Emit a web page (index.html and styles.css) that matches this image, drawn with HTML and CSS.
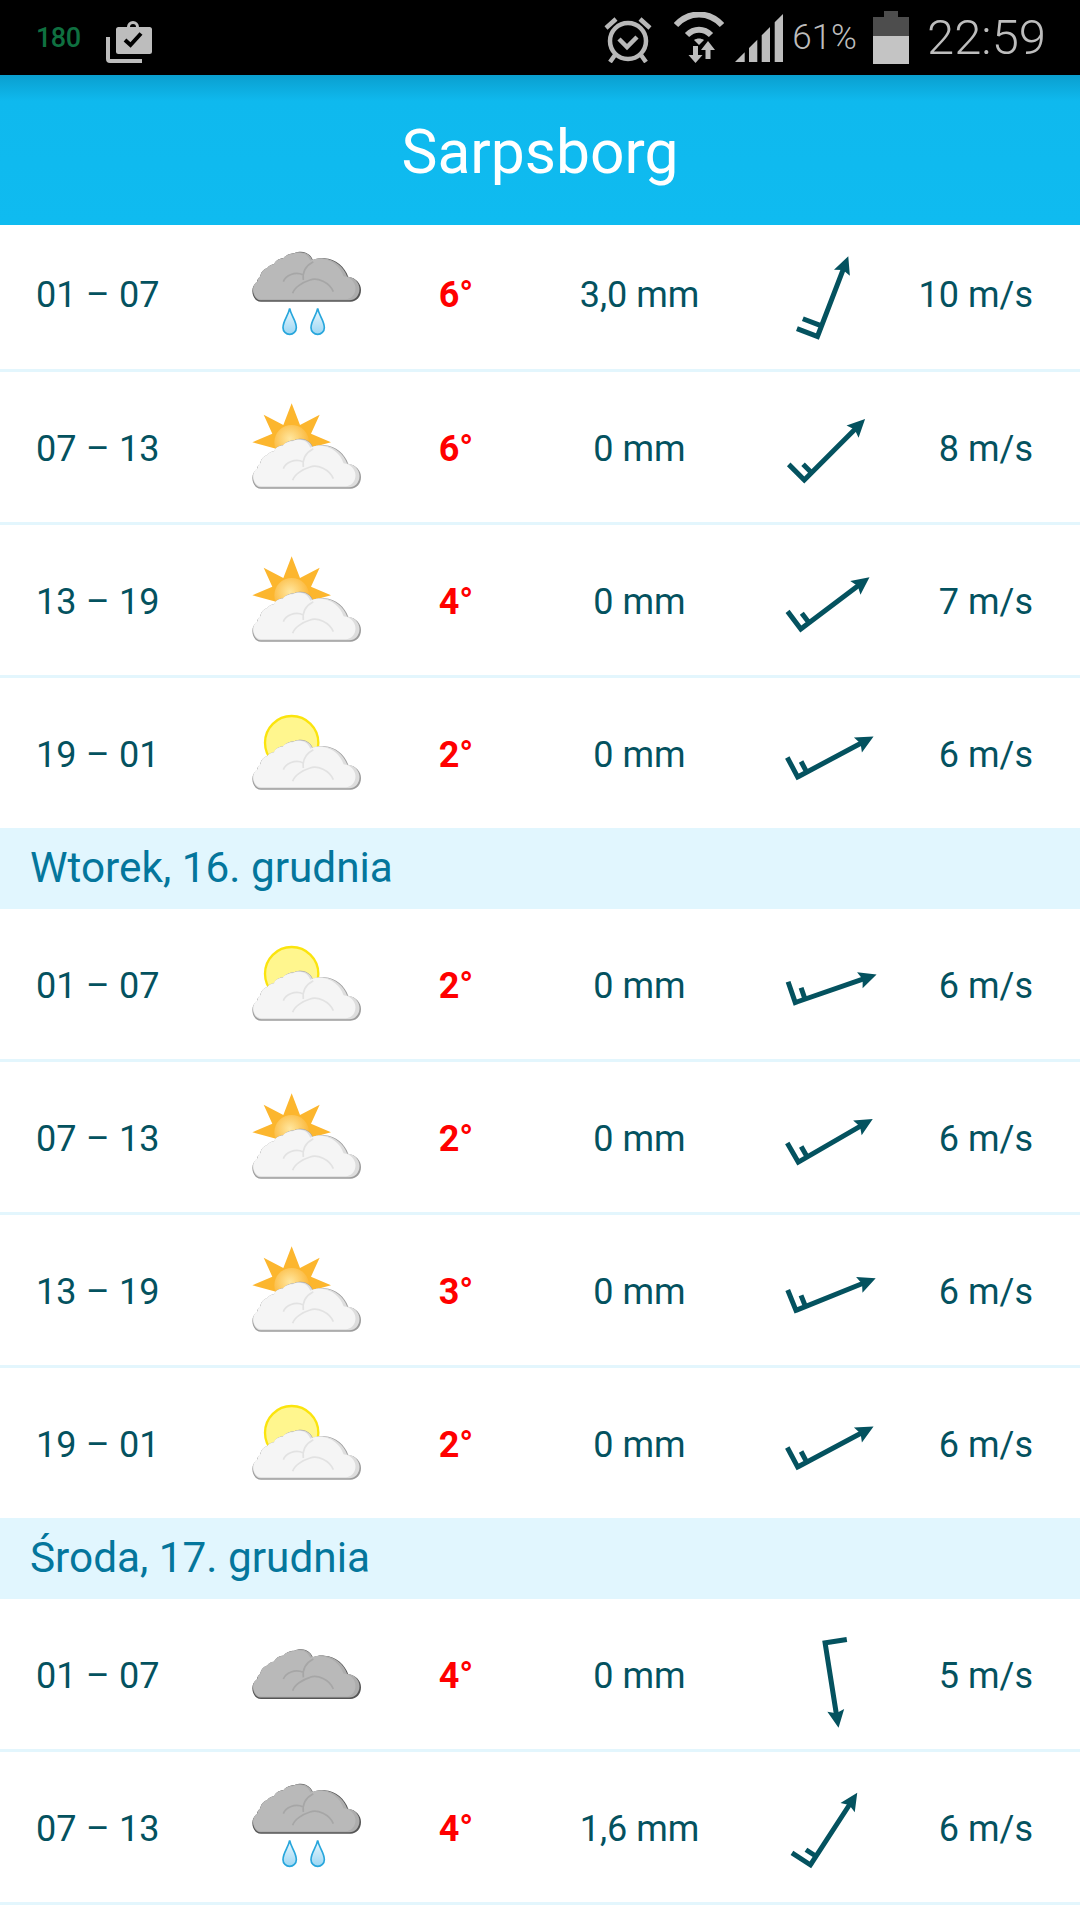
FILE: index.html
```html
<!DOCTYPE html>
<html lang="pl">
<head>
<meta charset="utf-8">
<title>Sarpsborg</title>
<link rel="stylesheet" href="styles.css">
</head>
<body>
<svg class="defs" width="0" height="0" aria-hidden="true">
  <defs>
    <radialGradient id="sunGrad" cx="45%" cy="40%" r="65%">
      <stop offset="0" stop-color="#ffe7a0"/><stop offset="1" stop-color="#fbb02a"/>
    </radialGradient>
    <linearGradient id="dropGrad" x1="0" y1="0" x2="0" y2="1">
      <stop offset="0" stop-color="#eef9fe"/><stop offset="1" stop-color="#9bd6f3"/>
    </linearGradient>
    <path id="cloud-shape" d="M26 150C8 150 0 132 0 118C0 106 6 96 14 92C14 84 18 78 24 75C24 64 32 54 44 50C50 42 58 38 66 38C68 28 80 20 94 20C100 10 114 5 126 5C134 0 150 -1 160 3C172 8 178 16 182 26C192 20 204 19 216 20C250 22 278 46 288 76C310 78 326 95 326 115C326 136 312 150 295 150Z"/>
    <symbol id="cloud" viewBox="0 0 326 150" overflow="visible">
      <use href="#cloud-shape" class="cl-edge"/>
      <use href="#cloud-shape" class="cl-mid" transform="translate(2 1) scale(.98 .965)"/>
      <use href="#cloud-shape" class="cl-body" transform="translate(3 3) scale(.94 .93)"/>
      <path class="cl-curl" d="M93 90C100 72 128 58 153 70M121 125C126 108 150 92 173 85C195 76 232 92 243 120M153 85C150 62 160 42 183 30"/>
    </symbol>
    <symbol id="rain" viewBox="0 0 330 264">
      <use href="#cloud" class="cloud-dark" x="1" y="2" width="326" height="150"/>
      <path class="drop" d="M113 172C117 194 133 208 133 230A20 20 0 0 1 93 230C93 208 109 194 113 172Z"/>
      <path class="drop" d="M197 172C201 194 217 208 217 230A20 20 0 0 1 177 230C177 208 193 194 197 172Z"/>
    </symbol>
    <symbol id="overcast" viewBox="0 0 330 264">
      <use href="#cloud" class="cloud-dark" x="1" y="57" width="326" height="150"/>
    </symbol>
    <symbol id="sun-cloud" viewBox="0 0 330 264">
      <path class="rays" d="M119 1L144 66L203 35L177 92L237 118L119 150L1 118L61 92L35 35L94 66Z"/>
      <circle cx="119" cy="118" r="52" fill="url(#sunGrad)"/>
      <use href="#cloud" class="cloud-light" x="1" y="107" width="326" height="150"/>
    </symbol>
    <symbol id="pale-sun-cloud" viewBox="0 0 330 264">
      <circle class="pale-sun" cx="119" cy="101" r="80"/>
      <use href="#cloud" class="cloud-light" x="1" y="92" width="326" height="150"/>
    </symbol>
    <path id="head" d="M0 -48.200L8.500 -30.500L0 -33.500L-8.500 -30.500Z"/>
    <symbol id="wind-2" viewBox="-55 -60.500 110 110" overflow="visible">
      <path class="shaft" d="M0 37.800V-36M2.500 37.800H-22M0 26.500H-20"/>
      <use href="#head" class="head"/>
    </symbol>
    <symbol id="wind-h" viewBox="-55 -60.500 110 110" overflow="visible">
      <path class="shaft" d="M0 37.800V-36M2.500 37.800H-22M0 27.500H-12"/>
      <use href="#head" class="head"/>
    </symbol>
    <symbol id="wind-1" viewBox="-55 -60.500 110 110" overflow="visible">
      <path class="shaft" d="M0 37.800V-36M2.500 37.800H-22"/>
      <use href="#head" class="head"/>
    </symbol>
  </defs>
</svg>

<div class="screen">
  <header class="status">
    <div class="status-left">
      <span class="net">180</span>
      <svg class="ic-clip" width="46" height="44" viewBox="0 0 46 44">
        <path class="clip-back" d="M2 18V40A2 2 0 0 0 4 42H36"/>
        <path class="clip-body" d="M12.500 8H21A6 6 0 0 1 33 8H43.500A2.500 2.500 0 0 1 46 10.500V32.500A2.500 2.500 0 0 1 43.500 35H12.500A2.500 2.500 0 0 1 10 32.500V10.500A2.500 2.500 0 0 1 12.500 8Z"/>
        <path class="clip-hole" d="M24 8A3 3 0 0 1 30 8Z"/>
        <path class="clip-check" d="M19 21L24.500 26L35 14.500"/>
      </svg>
    </div>
    <div class="status-right">
      <svg class="ic-alarm" width="48" height="49" viewBox="0 0 48 49">
        <circle class="st-line" cx="24" cy="27" r="18"/>
        <path class="st-line" d="M15 25L23 33L33 23"/>
        <path class="st-line" d="M2 14L12 5M46 14L36 5M11 41L6 48M37 41L42 48"/>
      </svg>
      <svg class="ic-wifi" width="50" height="51" viewBox="0 0 50 51">
        <path class="st-band" d="M2 13C15 -1 35 -1 48 13M13 23C20 16 30 16 37 23"/>
        <path class="st-fill" d="M20 28C23 26 27 26 30 28L25 33Z"/>
        <path class="st-fill" d="M19 34H24V43H28.500L21.500 51L14.500 43H19Z"/>
        <path class="st-fill" d="M31.500 47V38H27L34 29L41 38H36.500V47Z"/>
      </svg>
      <svg class="ic-signal" width="48" height="48" viewBox="0 0 48 48">
        <path class="st-fill" d="M0 48L9.700 38.300V48ZM14 34L22.300 25.700V48H14ZM26.700 21.300L35 13V48H26.700ZM39.700 8.300L48 0V48H39.700Z"/>
      </svg>
      <span class="pct">61%</span>
      <svg class="ic-batt" width="36" height="53" viewBox="0 0 36 53">
        <path class="batt-empty" d="M11 0H25V6H36V25H0V6H11Z"/>
        <rect class="batt-full" x="0" y="25" width="36" height="28"/>
      </svg>
      <span class="clock">22:59</span>
    </div>
  </header>

  <div class="appbar"><h1 class="title">Sarpsborg</h1></div>

  <main class="forecast">
    <div class="row row-first">
      <span class="cell time">01 – 07</span>
      <svg class="wx" viewBox="0 0 330 264"><use href="#rain"/></svg>
      <span class="cell temp">6°</span><span class="cell mm">3,0 mm</span>
      <svg class="wind" viewBox="-54 -61.200 110 110"><use href="#wind-2" x="-55" y="-60.500" width="110" height="110" transform="rotate(21)"/></svg>
      <span class="cell speed">10 m/s</span>
    </div>
    <div class="row">
      <span class="cell time">07 – 13</span>
      <svg class="wx" viewBox="0 0 330 264"><use href="#sun-cloud"/></svg>
      <span class="cell temp">6°</span><span class="cell mm">0 mm</span>
      <svg class="wind" viewBox="-54 -61.200 110 110"><use href="#wind-h" x="-55" y="-60.500" width="110" height="110" transform="rotate(45)"/></svg>
      <span class="cell speed">8 m/s</span>
    </div>
    <div class="row">
      <span class="cell time">13 – 19</span>
      <svg class="wx" viewBox="0 0 330 264"><use href="#sun-cloud"/></svg>
      <span class="cell temp">4°</span><span class="cell mm">0 mm</span>
      <svg class="wind" viewBox="-54 -61.200 110 110"><use href="#wind-h" x="-55" y="-60.500" width="110" height="110" transform="rotate(53)"/></svg>
      <span class="cell speed">7 m/s</span>
    </div>
    <div class="row row-last">
      <span class="cell time">19 – 01</span>
      <svg class="wx" viewBox="0 0 330 264"><use href="#pale-sun-cloud"/></svg>
      <span class="cell temp">2°</span><span class="cell mm">0 mm</span>
      <svg class="wind" viewBox="-54 -61.200 110 110"><use href="#wind-h" x="-55" y="-60.500" width="110" height="110" transform="rotate(62)"/></svg>
      <span class="cell speed">6 m/s</span>
    </div>

    <h2 class="day">Wtorek, 16. grudnia</h2>

    <div class="row">
      <span class="cell time">01 – 07</span>
      <svg class="wx" viewBox="0 0 330 264"><use href="#pale-sun-cloud"/></svg>
      <span class="cell temp">2°</span><span class="cell mm">0 mm</span>
      <svg class="wind" viewBox="-54 -61.200 110 110"><use href="#wind-h" x="-55" y="-60.500" width="110" height="110" transform="rotate(71)"/></svg>
      <span class="cell speed">6 m/s</span>
    </div>
    <div class="row">
      <span class="cell time">07 – 13</span>
      <svg class="wx" viewBox="0 0 330 264"><use href="#sun-cloud"/></svg>
      <span class="cell temp">2°</span><span class="cell mm">0 mm</span>
      <svg class="wind" viewBox="-54 -61.200 110 110"><use href="#wind-h" x="-55" y="-60.500" width="110" height="110" transform="rotate(60)"/></svg>
      <span class="cell speed">6 m/s</span>
    </div>
    <div class="row">
      <span class="cell time">13 – 19</span>
      <svg class="wx" viewBox="0 0 330 264"><use href="#sun-cloud"/></svg>
      <span class="cell temp">3°</span><span class="cell mm">0 mm</span>
      <svg class="wind" viewBox="-54 -61.200 110 110"><use href="#wind-h" x="-55" y="-60.500" width="110" height="110" transform="rotate(68)"/></svg>
      <span class="cell speed">6 m/s</span>
    </div>
    <div class="row row-last">
      <span class="cell time">19 – 01</span>
      <svg class="wx" viewBox="0 0 330 264"><use href="#pale-sun-cloud"/></svg>
      <span class="cell temp">2°</span><span class="cell mm">0 mm</span>
      <svg class="wind" viewBox="-54 -61.200 110 110"><use href="#wind-h" x="-55" y="-60.500" width="110" height="110" transform="rotate(62)"/></svg>
      <span class="cell speed">6 m/s</span>
    </div>

    <h2 class="day">Środa, 17. grudnia</h2>

    <div class="row">
      <span class="cell time">01 – 07</span>
      <svg class="wx" viewBox="0 0 330 264"><use href="#overcast"/></svg>
      <span class="cell temp">4°</span><span class="cell mm">0 mm</span>
      <svg class="wind" viewBox="-54 -61.200 110 110"><use href="#wind-1" x="-55" y="-60.500" width="110" height="110" transform="rotate(171)"/></svg>
      <span class="cell speed">5 m/s</span>
    </div>
    <div class="row">
      <span class="cell time">07 – 13</span>
      <svg class="wx" viewBox="0 0 330 264"><use href="#rain"/></svg>
      <span class="cell temp">4°</span><span class="cell mm">1,6 mm</span>
      <svg class="wind" viewBox="-54 -61.200 110 110"><use href="#wind-h" x="-55" y="-60.500" width="110" height="110" transform="rotate(33)"/></svg>
      <span class="cell speed">6 m/s</span>
    </div>
  </main>
</div>
</body>
</html>
```
FILE: styles.css
```css
* { box-sizing: border-box; }
html, body { margin: 0; padding: 0; background: #fff; }
body { font-family: Roboto, "Liberation Sans", sans-serif; }
.defs { position: absolute; }
.screen { width: 1080px; height: 1920px; overflow: hidden; }

.status { height: 75px; background: #000; display: flex; justify-content: space-between; align-items: center; }
.status-left { display: flex; align-items: center; padding-left: 36px; gap: 25px; }
.net { color: #0f7040; font-size: 27px; font-weight: 500; letter-spacing: -.5px; }
.status-right { display: flex; align-items: center; padding-right: 34px; }
.ic-clip { margin-top: 7px; }
.clip-back { fill: none; stroke: #bdbdbd; stroke-width: 4; }
.clip-body { fill: #bdbdbd; }
.clip-hole { fill: #000; }
.clip-check { fill: none; stroke: #000; stroke-width: 4; }
.st-line { fill: none; stroke: #b8b8b8; stroke-width: 4.5; }
.st-band { fill: none; stroke: #bdbdbd; stroke-width: 6; }
.st-fill { fill: #bdbdbd; }
.ic-alarm { margin-top: 2px; }
.ic-wifi { margin-left: 22px; margin-top: 0; }
.ic-signal { margin-left: 11px; margin-top: 1px; }
.pct { margin-left: 9px; color: #bdbdbd; font-size: 35px; font-weight: 300; }
.ic-batt { margin-left: 16px; }
.batt-empty { fill: #4d4d4d; }
.batt-full { fill: #c4c4c4; }
.clock { margin-left: 18px; color: #bdbdbd; font-size: 49px; font-weight: 300; }

.appbar { height: 150px; background: linear-gradient(#0a9fcf 0, #0fb9ee 26px, #0fbbf0 100%); display: flex; align-items: center; justify-content: center; }
.title { margin: 0; padding-top: 5px; color: #fff; font-size: 60.5px; font-weight: 400; }

.row {
  height: 153px;
  padding-left: 36px;
  border-bottom: 3px solid #e3f6fd;
  display: grid;
  grid-template-columns: 216px 110px 188px 179px 205px 99px;
  align-items: center;
  color: #04525f;
  font-size: 36px;
  font-weight: 400;
}
.row-first { height: 147px; padding-bottom: 4px; }
.row-last { height: 150px; border-bottom: 0; }
.cell { padding-top: 3px; }
.row-first .cell { padding-top: 0; }
.time { word-spacing: .5px; }
.wx { width: 110px; height: 88px; }
.temp { color: #f00; font-weight: 700; text-align: center; }
.mm { text-align: center; }
.wind { width: 110px; height: 110px; justify-self: center; overflow: visible; }
.speed { justify-self: end; white-space: nowrap; }

.day { margin: 0; height: 81px; padding-left: 30px; background: #e1f6fe; color: #04769c; font-size: 42.3px; font-weight: 400; line-height: 80px; }

.cloud-dark { --edge: #555; --mid: #adadad; --body: #b9b9b9; --curl: #a6a6a6; }
.cloud-light { --edge: #9d9d9d; --mid: #ddd; --body: #f5f5f5; --curl: #e2e2e2; }
.cl-edge { fill: var(--edge); }
.cl-mid { fill: var(--mid); }
.cl-body { fill: var(--body); }
.cl-curl { fill: none; stroke: var(--curl); stroke-width: 5; }
.rays { fill: #fcb62e; }
.drop { fill: url(#dropGrad); stroke: #27a6dc; stroke-width: 5; }
.pale-sun { fill: #fff68e; stroke: #fbe40d; stroke-width: 7; }
.shaft { fill: none; stroke: #04525f; stroke-width: 5; }
.head { fill: #04525f; }
```
